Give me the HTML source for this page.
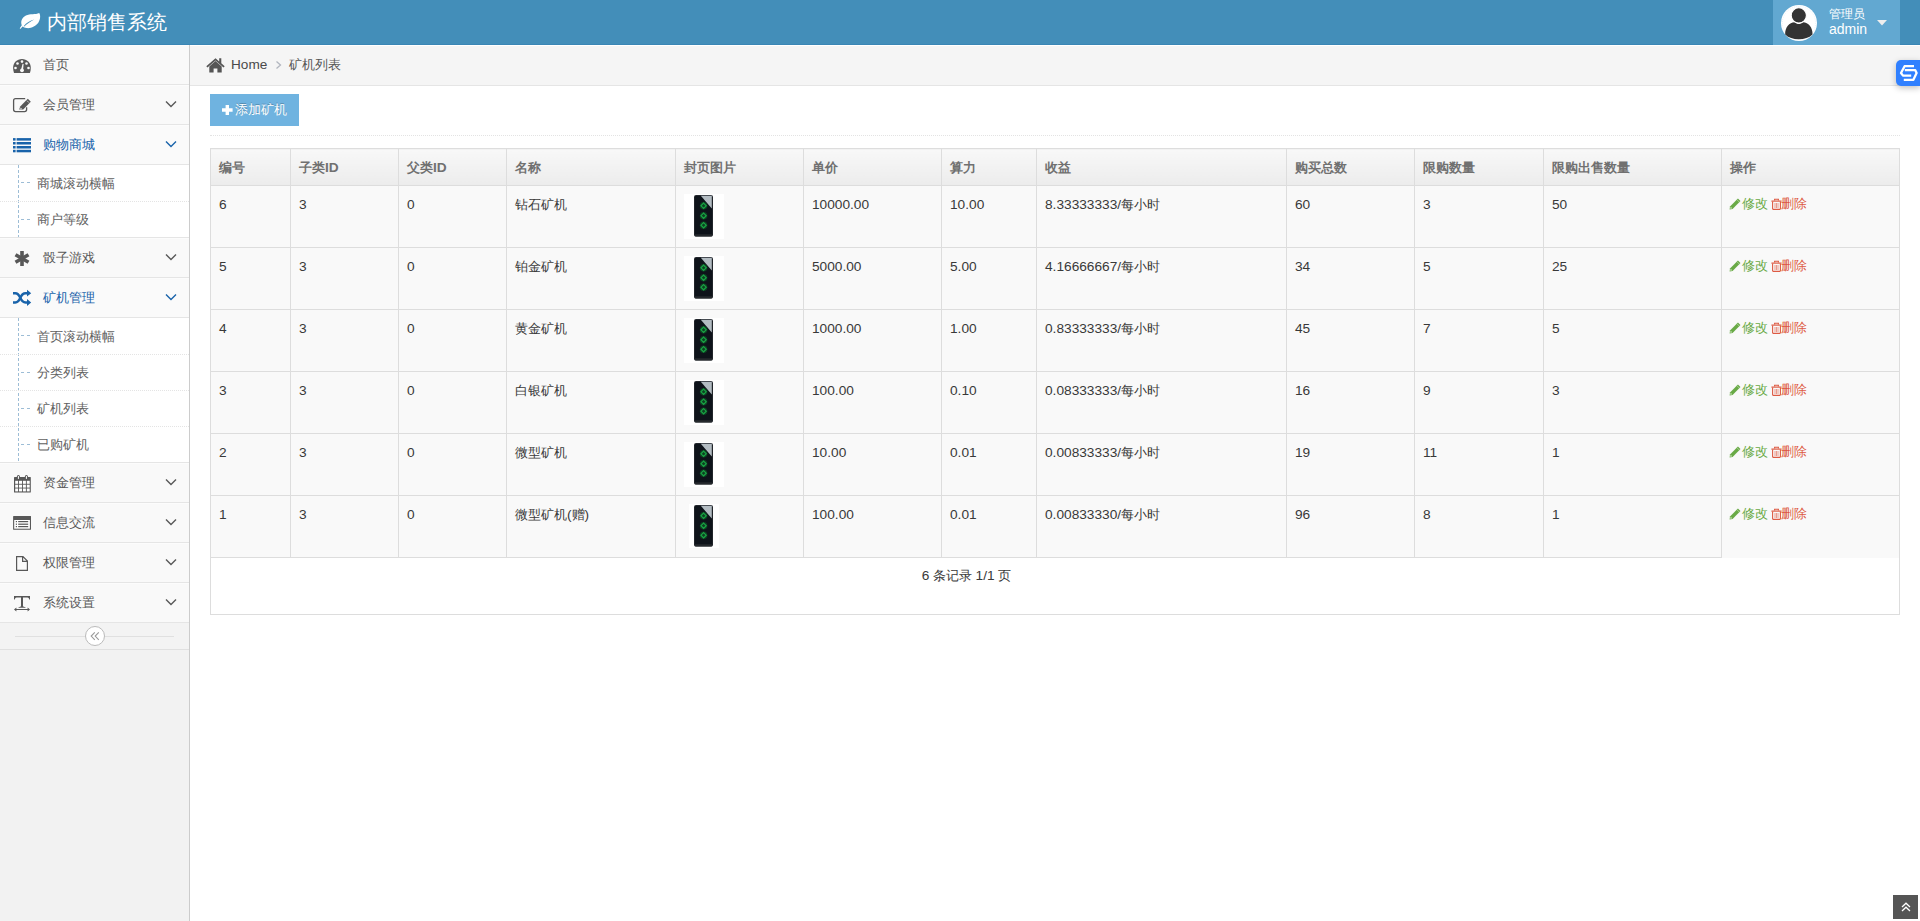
<!DOCTYPE html>
<html><head><meta charset="utf-8">
<style>
*{box-sizing:border-box}
html,body{margin:0;padding:0;width:1920px;height:921px;overflow:hidden;background:#fff;font-family:"Liberation Sans",sans-serif;font-size:13px;color:#393939}
.abs{position:absolute}
#nav{position:absolute;left:0;top:0;width:1920px;height:45px;background:#438EB9;border-bottom:1px solid #3a86b5}
#brand{position:absolute;left:47px;top:8px;color:#fff;font-size:20px;line-height:28px;white-space:nowrap}
#user{position:absolute;left:1773px;top:0;width:127px;height:45px;background:#62A8D1}
#sidebar{position:absolute;left:0;top:45px;width:190px;height:876px;background:#f2f2f2;border-right:1px solid #ccc}
.li{position:relative;width:189px;border-top:1px solid #fcfcfc;border-bottom:1px solid #e5e5e5;background:#f9f9f9}
.li .a{position:relative;height:38px;color:#585858}
.li .a span{position:absolute;left:43px;top:10px;line-height:18px;font-size:13px;white-space:nowrap}
.li.open .a{background:#fafafa;color:#1963aa}
.li .ic{position:absolute;left:13px;top:10px}
.li .arr{position:absolute;left:165px;top:14px}
.sub{position:relative;background:#fff;border-top:1px solid #e5e5e5}
.sub:before{content:"";position:absolute;left:18px;top:0;bottom:0;width:1px;background:repeating-linear-gradient(#9dbdd6 0 3px,transparent 3px 5px)}
.sub .s{position:relative;height:36px;border-top:1px dotted #e4e4e4;color:#616161}
.sub .s:first-child{border-top:0}
.sub .s:first-child span{top:10px}
.sub .s:after{content:"";position:absolute;left:21px;top:17px;width:10px;height:1px;background:repeating-linear-gradient(90deg,#9dbdd6 0 3px,transparent 3px 6px)}
.sub .s span{position:absolute;left:37px;top:9px;line-height:18px;white-space:nowrap}
#crumbs{position:absolute;left:190px;top:45px;width:1730px;height:41px;background:#f5f5f5;border-top:1px solid #fff;border-bottom:1px solid #e5e5e5}
#content{position:absolute;left:190px;top:86px;width:1730px}
#tbox{position:absolute;left:210px;top:148px;width:1690px;height:467px;border:1px solid #ddd;background:#fff}
table{border-collapse:collapse;table-layout:fixed;position:absolute;left:-1px;top:-1px;width:1690px}
th,td{border:1px solid #ddd;padding:0 8px;text-align:left;vertical-align:top}
th{height:37px;background:linear-gradient(#f8f8f8,#ececec);color:#707070;font-weight:bold;font-size:13px;line-height:18px;padding-top:10px}
td{height:62px;background:#f9f9f9;color:#393939;line-height:18px;padding-top:10px}
.n{font-size:13.7px}
#collapse{position:relative;height:27px;background:#f3f3f3;border-bottom:1px solid #e0e0e0}
#collapse .cl{position:absolute;left:15px;right:15px;top:13px;border-top:1px solid #e0e0e0}
#collapse .cb{position:absolute;left:85px;top:3px;width:20px;height:20px;border:1px solid #bbb;border-radius:50%;background:#fff}
#btn{position:absolute;left:210px;top:94px;width:89px;height:32px;background:#6fb3e0;color:#fff}
#btn span{position:absolute;left:25px;top:7px;line-height:18px;font-size:13px;white-space:nowrap;text-shadow:0 -1px 0 rgba(0,0,0,.25)}
#hr{position:absolute;left:210px;top:135px;width:1690px;border-top:1px dotted #e3e3e3}
.im{width:40px;height:45px;margin-top:-2px}
.im1{}
.im svg{display:block}
.ed{color:#69aa46}.dl{color:#dd5a43}
.ops{position:relative;height:18px;top:-1px}.ops svg,.ops span{position:absolute;top:0}.ops span{white-space:nowrap}
tbody tr:last-child td.op{border-bottom:0}
#pg{position:absolute;left:0;width:1511px;top:418px;text-align:center;color:#393939;line-height:18px}
#widget{position:absolute;left:1896px;top:60px;width:24px;height:26px;background:#3080ff;border-radius:5px 0 0 5px;box-shadow:0 2px 6px rgba(0,0,0,.25)}
#widget svg{display:block}
#up{position:absolute;left:1893px;top:895px;width:25px;height:24px;background:#555}
</style></head><body>
<div id="nav">
  <svg class="abs" style="left:19px;top:12px" width="23" height="18" viewBox="0 0 23 18"><path fill="#fff" d="M20.2 1C21.5 2.5 21.8 7 19.3 10.7C17 14 11.5 16.8 7.5 16C6 15.8 4.5 15.2 3.6 14.5L1.8 16.6C1.3 17.1 0.5 16.6 0.9 16L2.8 13.3C1.5 10 2.5 5.8 6.9 3.6C11 1.6 16.5 2.8 20.2 1Z"/><path fill="#438EB9" d="M4.6 14.3C7.5 10.8 11 8.6 15.2 7.6C11.6 9.6 8.2 11.6 5.3 14.6Z"/></svg>
  <div id="brand">内部销售系统</div>
  <div id="user">
<svg class="abs" style="left:8px;top:5px" width="36" height="36" viewBox="0 0 36 36"><circle cx="18" cy="18" r="18" fill="#fff"/><circle cx="18" cy="18" r="16.6" fill="none" stroke="#d5e3ee" stroke-width="0.5" stroke-dasharray="1 1.2"/><path fill="#333" d="M4.2 29.5C3.8 22.5 8.5 17.2 13.5 17.2C15 18.4 16.4 19 17.8 19C19.2 19 20.6 18.4 22.1 17.2C27.1 17.2 32 22.5 31.5 29.5C28 32.8 23.5 34.2 17.8 34.2C12 34.2 7.6 32.8 4.2 29.5Z"/><circle cx="17.8" cy="10.4" r="7.6" fill="#333" stroke="#fff" stroke-width="1.1"/></svg>
<span class="abs" style="left:56px;top:7px;font-size:12px;line-height:14px;color:#fff;white-space:nowrap">管理员</span>
<span class="abs" style="left:56px;top:21px;font-size:14px;line-height:16px;color:#fff;white-space:nowrap">admin</span>
<svg class="abs" style="left:104px;top:20px" width="10" height="6" viewBox="0 0 10 6"><path fill="#eee" d="M0 0H10L5 5.5Z"/></svg>
</div>
</div>
<div id="sidebar"><div class="li"><div class="a"><svg class="ic" style="left:10px;top:8px" width="24" height="22" viewBox="0 0 24 22"><path fill="currentColor" d="M12 5C7 5 3.1 8.8 3.1 13.8c0 1.9 0.4 3.6 0.9 5.1h15.9c0.6-1.5 0.9-3.2 0.9-5.1C20.8 8.8 16.9 5 12 5z"/><g fill="#f9f9f9"><circle cx="12" cy="7.6" r="1.3"/><circle cx="7.5" cy="9.5" r="1.3"/><circle cx="16.5" cy="9.5" r="1.3"/><circle cx="5.5" cy="14" r="1.3"/><circle cx="18.5" cy="14" r="1.3"/><circle cx="12" cy="16.3" r="1.9"/><path d="M11 16L12.6 9.8L13.6 10L13 16.4Z"/></g></svg><span>首页</span></div></div><div class="li"><div class="a"><svg class="ic" style="left:10px;top:8px" width="24" height="22" viewBox="0 0 24 22"><path d="M15.2 4.6H5.6Q3.6 4.6 3.6 6.6V15.6Q3.6 17.6 5.6 17.6H14.6Q16.6 17.6 16.6 15.6V13.2" fill="none" stroke="currentColor" stroke-width="1.3"/><path fill="currentColor" d="M9.2 15.6L10.2 12.4L17.8 4.8L20.8 7.8L13.2 15.4Z"/><path fill="#f9f9f9" d="M10.6 13.6L12 15L10.4 15.4Z"/><path stroke="#f9f9f9" stroke-width="0.7" d="M17 6.7L18.9 8.6"/></svg><span>会员管理</span><svg class="arr" width="12" height="8" viewBox="0 0 12 8"><path d="M1 1.5L6 6.5L11 1.5" fill="none" stroke="currentColor" stroke-width="1.4"/></svg></div></div><div class="li open"><div class="a"><svg class="ic" style="left:10px;top:8px" width="24" height="22" viewBox="0 0 24 22"><g fill="currentColor"><rect x="3" y="4.1" width="2.6" height="2.5"/><rect x="6.6" y="4.1" width="14.4" height="2.5"/><rect x="3" y="8" width="2.6" height="2.5"/><rect x="6.6" y="8" width="14.4" height="2.5"/><rect x="3" y="12" width="2.6" height="2.5"/><rect x="6.6" y="12" width="14.4" height="2.5"/><rect x="3" y="15.8" width="2.6" height="2.5"/><rect x="6.6" y="15.8" width="14.4" height="2.5"/></g></svg><span>购物商城</span><svg class="arr" width="12" height="8" viewBox="0 0 12 8"><path d="M1 1.5L6 6.5L11 1.5" fill="none" stroke="currentColor" stroke-width="1.4"/></svg></div><div class="sub"><div class="s"><span>商城滚动横幅</span></div><div class="s"><span>商户等级</span></div></div></div><div class="li"><div class="a"><svg class="ic" style="left:10px;top:8px" width="24" height="22" viewBox="0 0 24 22"><g fill="currentColor" transform="translate(12 11.5)"><rect x="-1.8" y="-7.5" width="3.6" height="15"/><rect x="-1.8" y="-7.5" width="3.6" height="15" transform="rotate(60)"/><rect x="-1.8" y="-7.5" width="3.6" height="15" transform="rotate(-60)"/></g></svg><span>骰子游戏</span><svg class="arr" width="12" height="8" viewBox="0 0 12 8"><path d="M1 1.5L6 6.5L11 1.5" fill="none" stroke="currentColor" stroke-width="1.4"/></svg></div></div><div class="li open"><div class="a"><svg class="ic" style="left:10px;top:8px" width="24" height="22" viewBox="0 0 24 22"><g fill="none" stroke="currentColor" stroke-width="2.4"><path d="M3 6.2H5.3C8.3 6.2 9.3 8.5 10.3 10.8S12.5 15.5 15.5 15.5H17.5"/><path d="M3 15.5H5.3C8.3 15.5 9.3 13.2 10.3 10.8S12.5 6.2 15.5 6.2H17.5"/></g><path fill="currentColor" d="M17 2.8L21.2 6.2L17 9.6Z M17 12.1L21.2 15.5L17 18.9Z"/></svg><span>矿机管理</span><svg class="arr" width="12" height="8" viewBox="0 0 12 8"><path d="M1 1.5L6 6.5L11 1.5" fill="none" stroke="currentColor" stroke-width="1.4"/></svg></div><div class="sub"><div class="s"><span>首页滚动横幅</span></div><div class="s"><span>分类列表</span></div><div class="s"><span>矿机列表</span></div><div class="s"><span>已购矿机</span></div></div></div><div class="li"><div class="a"><svg class="ic" style="left:10px;top:8px" width="24" height="22" viewBox="0 0 24 22"><path fill="currentColor" d="M4.6 5H20.2Q20.8 5 20.8 5.6V19.9Q20.8 20.6 20.2 20.6H4.6Q4 20.6 4 19.9V5.6Q4 5 4.6 5Z"/><g fill="#fff"><rect x="5.2" y="8.8" width="2.9" height="3"/><rect x="9" y="8.8" width="3" height="3"/><rect x="12.9" y="8.8" width="3" height="3"/><rect x="16.8" y="8.8" width="2.9" height="3"/><rect x="5.2" y="12.7" width="2.9" height="2.9"/><rect x="9" y="12.7" width="3" height="2.9"/><rect x="12.9" y="12.7" width="3" height="2.9"/><rect x="16.8" y="12.7" width="2.9" height="2.9"/><rect x="5.2" y="16.5" width="2.9" height="2.9"/><rect x="9" y="16.5" width="3" height="2.9"/><rect x="12.9" y="16.5" width="3" height="2.9"/><rect x="16.8" y="16.5" width="2.9" height="2.9"/></g><g fill="none" stroke="currentColor" stroke-width="1.1"><rect x="7.4" y="3.5" width="2" height="4" rx="1"/><rect x="15.4" y="3.5" width="2" height="4" rx="1"/></g><g fill="#fff"><rect x="7.9" y="4.3" width="1" height="2.6"/><rect x="15.9" y="4.3" width="1" height="2.6"/></g></svg><span>资金管理</span><svg class="arr" width="12" height="8" viewBox="0 0 12 8"><path d="M1 1.5L6 6.5L11 1.5" fill="none" stroke="currentColor" stroke-width="1.4"/></svg></div></div><div class="li"><div class="a"><svg class="ic" style="left:10px;top:8px" width="24" height="22" viewBox="0 0 24 22"><path fill="currentColor" d="M4.1 4H20.8Q21 4 21 4.5V17.2Q21 17.8 20.4 17.8H3.7Q3.1 17.8 3.1 17.2V4.6Q3.1 4 3.7 4Z"/><rect fill="#fff" x="4.2" y="8" width="15.7" height="8.7"/><g fill="currentColor"><rect x="5.8" y="9" width="1.2" height="1.2"/><rect x="8.2" y="9" width="10" height="1.2"/><rect x="5.8" y="11.6" width="1.2" height="1.2"/><rect x="8.2" y="11.6" width="10" height="1.2"/><rect x="5.8" y="14" width="1.2" height="1.2"/><rect x="8.2" y="14" width="10" height="1.2"/></g></svg><span>信息交流</span><svg class="arr" width="12" height="8" viewBox="0 0 12 8"><path d="M1 1.5L6 6.5L11 1.5" fill="none" stroke="currentColor" stroke-width="1.4"/></svg></div></div><div class="li"><div class="a"><svg class="ic" style="left:10px;top:8px" width="24" height="22" viewBox="0 0 24 22"><path d="M6.6 4.6H13L17.4 9V18.4H6.6Z M12.6 4.6V9.4H17.4" fill="none" stroke="currentColor" stroke-width="1.2"/></svg><span>权限管理</span><svg class="arr" width="12" height="8" viewBox="0 0 12 8"><path d="M1 1.5L6 6.5L11 1.5" fill="none" stroke="currentColor" stroke-width="1.4"/></svg></div></div><div class="li"><div class="a"><svg class="ic" style="left:10px;top:8px" width="24" height="22" viewBox="0 0 24 22"><g fill="currentColor"><path d="M4 4H20V7.5H19.2Q19 5.7 17.5 5.5H13V14.2Q13.3 14.8 15.5 15.2V15.8H8.5V15.2Q10.7 14.8 11 14.2V5.5H6.5Q5 5.7 4.8 7.5H4Z"/><path d="M4 17.5L6.4 15.6V17H17.6V15.6L20 17.5L17.6 19.4V18H6.4V19.4Z"/></g></svg><span>系统设置</span><svg class="arr" width="12" height="8" viewBox="0 0 12 8"><path d="M1 1.5L6 6.5L11 1.5" fill="none" stroke="currentColor" stroke-width="1.4"/></svg></div></div><div id="collapse"><div class="cl"></div><div class="cb"><svg class="abs" style="left:4px;top:4px" width="11" height="11" viewBox="0 0 11 11"><path d="M4.8 1.4L1.2 5.1L4.8 8.8M8.8 1.4L5.2 5.1L8.8 8.8" fill="none" stroke="#999" stroke-width="1.1"/></svg></div></div></div>
<div id="crumbs">
<svg class="abs" style="left:16px;top:11px" width="19" height="16" viewBox="0 0 19 16"><path fill="#555" d="M9.5 1.2L0.3 9.3L1.5 10.5L9.5 3.5L17.5 10.5L18.7 9.3L15.3 6.3V1.2H13.2V4.5Z M3.3 9.4V15.5H7.6V11.4H11.4V15.5H15.7V9.4L9.5 4Z"/></svg>
<span class="abs" style="left:41px;top:11px;font-size:13.6px;line-height:16px;color:#4a4a4a">Home</span>
<svg class="abs" style="left:85px;top:14px" width="8" height="10" viewBox="0 0 8 10"><path d="M1.5 1.5L5.5 5L1.5 8.5" fill="none" stroke="#b2b6bf" stroke-width="1.3"/></svg>
<span class="abs" style="left:99px;top:11px;font-size:13px;line-height:16px;color:#555">矿机列表</span>
</div>
<div id="btn"><svg class="abs" style="left:12px;top:11px" width="11" height="10" viewBox="0 0 11 10"><path fill="#fff" d="M3.6 0H7V3.3H10.6V6.7H7V10H3.6V6.7H0V3.3H3.6Z"/></svg><span>添加矿机</span></div>
<div id="hr"></div>
<svg width="0" height="0" style="position:absolute"><defs><symbol id="case" viewBox="0 0 40 45"><rect x="0" y="0" width="40" height="45" fill="#fff"/><use href="#casebody"/></symbol><symbol id="casebody" viewBox="0 0 40 45"><rect x="10" y="1" width="19" height="41.5" rx="2" fill="#2a2e33"/><rect x="10.7" y="1.8" width="17.6" height="40" rx="1.5" fill="#0e131a"/><path d="M16.8 1.8H27.8V14.5Z" fill="#b3bcc2"/><g fill="#0d4a24" opacity="0.85"><circle cx="19.6" cy="11.8" r="3.8"/><circle cx="19.6" cy="21.7" r="3.8"/><circle cx="19.6" cy="31.2" r="3.8"/></g><g fill="none" stroke="#19a444" stroke-width="1.2"><path d="M19.6 9.2L22.2 11.8L19.6 14.4L17 11.8Z"/><path d="M19.6 19.1L22.2 21.7L19.6 24.3L17 21.7Z"/><path d="M19.6 28.6L22.2 31.2L19.6 33.8L17 31.2Z"/></g><rect x="10.5" y="40.2" width="18" height="2.2" rx="1" fill="#25292d"/></symbol><symbol id="case1" viewBox="0 0 40 45"><rect x="5" y="0" width="30" height="44" fill="#fff"/><use href="#casebody"/></symbol></defs></svg><div id="tbox"><table><colgroup><col style="width:80px"><col style="width:108px"><col style="width:108px"><col style="width:169px"><col style="width:128px"><col style="width:138px"><col style="width:95px"><col style="width:250px"><col style="width:128px"><col style="width:129px"><col style="width:178px"><col style="width:178px"></colgroup><thead><tr><th>编号</th><th>子类<span class="n">ID</span></th><th>父类<span class="n">ID</span></th><th>名称</th><th>封页图片</th><th>单价</th><th>算力</th><th>收益</th><th>购买总数</th><th>限购数量</th><th>限购出售数量</th><th>操作</th></tr></thead><tbody><tr><td><span class="n">6</span></td><td><span class="n">3</span></td><td><span class="n">0</span></td><td>钻石矿机</td><td><div class="im"><svg width="40" height="45" viewBox="0 0 40 45"><use href="#case"/></svg></div></td><td><span class="n">10000.00</span></td><td><span class="n">10.00</span></td><td><span class="n">8.33333333/</span>每小时</td><td><span class="n">60</span></td><td><span class="n">3</span></td><td><span class="n">50</span></td><td class="op"><div class="ops"><svg style="left:-1px;top:3px" width="12" height="12" viewBox="0 0 12 12"><path fill="#69aa46" d="M0.6 11.4L1.03 8.43L8.93 0.53L11.47 3.07L3.57 10.97Z"/><circle cx="2" cy="10" r="0.8" fill="#dfeed6"/><path stroke="#cfe3c2" stroke-width="0.6" d="M7.83 1.63L10.37 4.17"/></svg><span class="ed" style="left:12px">修改</span><svg style="left:41px;top:3px" width="11" height="12" viewBox="0 0 11 12"><g fill="none" stroke="#dd5a43"><path stroke-width="1.1" d="M3.6 2.6V1.3H7.4V2.6"/><path stroke-width="1.2" d="M0.4 3.1H10.6"/><path stroke-width="1.1" d="M1.6 3.5V10.8Q1.6 11.4 2.2 11.4H8.8Q9.4 11.4 9.4 10.8V3.5"/><path stroke-width="0.8" stroke-opacity="0.75" d="M4 5V10M5.5 5V10M7 5V10"/></g></svg><span class="dl" style="left:51px">删除</span></div></td></tr><tr><td><span class="n">5</span></td><td><span class="n">3</span></td><td><span class="n">0</span></td><td>铂金矿机</td><td><div class="im"><svg width="40" height="45" viewBox="0 0 40 45"><use href="#case"/></svg></div></td><td><span class="n">5000.00</span></td><td><span class="n">5.00</span></td><td><span class="n">4.16666667/</span>每小时</td><td><span class="n">34</span></td><td><span class="n">5</span></td><td><span class="n">25</span></td><td class="op"><div class="ops"><svg style="left:-1px;top:3px" width="12" height="12" viewBox="0 0 12 12"><path fill="#69aa46" d="M0.6 11.4L1.03 8.43L8.93 0.53L11.47 3.07L3.57 10.97Z"/><circle cx="2" cy="10" r="0.8" fill="#dfeed6"/><path stroke="#cfe3c2" stroke-width="0.6" d="M7.83 1.63L10.37 4.17"/></svg><span class="ed" style="left:12px">修改</span><svg style="left:41px;top:3px" width="11" height="12" viewBox="0 0 11 12"><g fill="none" stroke="#dd5a43"><path stroke-width="1.1" d="M3.6 2.6V1.3H7.4V2.6"/><path stroke-width="1.2" d="M0.4 3.1H10.6"/><path stroke-width="1.1" d="M1.6 3.5V10.8Q1.6 11.4 2.2 11.4H8.8Q9.4 11.4 9.4 10.8V3.5"/><path stroke-width="0.8" stroke-opacity="0.75" d="M4 5V10M5.5 5V10M7 5V10"/></g></svg><span class="dl" style="left:51px">删除</span></div></td></tr><tr><td><span class="n">4</span></td><td><span class="n">3</span></td><td><span class="n">0</span></td><td>黄金矿机</td><td><div class="im"><svg width="40" height="45" viewBox="0 0 40 45"><use href="#case"/></svg></div></td><td><span class="n">1000.00</span></td><td><span class="n">1.00</span></td><td><span class="n">0.83333333/</span>每小时</td><td><span class="n">45</span></td><td><span class="n">7</span></td><td><span class="n">5</span></td><td class="op"><div class="ops"><svg style="left:-1px;top:3px" width="12" height="12" viewBox="0 0 12 12"><path fill="#69aa46" d="M0.6 11.4L1.03 8.43L8.93 0.53L11.47 3.07L3.57 10.97Z"/><circle cx="2" cy="10" r="0.8" fill="#dfeed6"/><path stroke="#cfe3c2" stroke-width="0.6" d="M7.83 1.63L10.37 4.17"/></svg><span class="ed" style="left:12px">修改</span><svg style="left:41px;top:3px" width="11" height="12" viewBox="0 0 11 12"><g fill="none" stroke="#dd5a43"><path stroke-width="1.1" d="M3.6 2.6V1.3H7.4V2.6"/><path stroke-width="1.2" d="M0.4 3.1H10.6"/><path stroke-width="1.1" d="M1.6 3.5V10.8Q1.6 11.4 2.2 11.4H8.8Q9.4 11.4 9.4 10.8V3.5"/><path stroke-width="0.8" stroke-opacity="0.75" d="M4 5V10M5.5 5V10M7 5V10"/></g></svg><span class="dl" style="left:51px">删除</span></div></td></tr><tr><td><span class="n">3</span></td><td><span class="n">3</span></td><td><span class="n">0</span></td><td>白银矿机</td><td><div class="im"><svg width="40" height="45" viewBox="0 0 40 45"><use href="#case"/></svg></div></td><td><span class="n">100.00</span></td><td><span class="n">0.10</span></td><td><span class="n">0.08333333/</span>每小时</td><td><span class="n">16</span></td><td><span class="n">9</span></td><td><span class="n">3</span></td><td class="op"><div class="ops"><svg style="left:-1px;top:3px" width="12" height="12" viewBox="0 0 12 12"><path fill="#69aa46" d="M0.6 11.4L1.03 8.43L8.93 0.53L11.47 3.07L3.57 10.97Z"/><circle cx="2" cy="10" r="0.8" fill="#dfeed6"/><path stroke="#cfe3c2" stroke-width="0.6" d="M7.83 1.63L10.37 4.17"/></svg><span class="ed" style="left:12px">修改</span><svg style="left:41px;top:3px" width="11" height="12" viewBox="0 0 11 12"><g fill="none" stroke="#dd5a43"><path stroke-width="1.1" d="M3.6 2.6V1.3H7.4V2.6"/><path stroke-width="1.2" d="M0.4 3.1H10.6"/><path stroke-width="1.1" d="M1.6 3.5V10.8Q1.6 11.4 2.2 11.4H8.8Q9.4 11.4 9.4 10.8V3.5"/><path stroke-width="0.8" stroke-opacity="0.75" d="M4 5V10M5.5 5V10M7 5V10"/></g></svg><span class="dl" style="left:51px">删除</span></div></td></tr><tr><td><span class="n">2</span></td><td><span class="n">3</span></td><td><span class="n">0</span></td><td>微型矿机</td><td><div class="im"><svg width="40" height="45" viewBox="0 0 40 45"><use href="#case"/></svg></div></td><td><span class="n">10.00</span></td><td><span class="n">0.01</span></td><td><span class="n">0.00833333/</span>每小时</td><td><span class="n">19</span></td><td><span class="n">11</span></td><td><span class="n">1</span></td><td class="op"><div class="ops"><svg style="left:-1px;top:3px" width="12" height="12" viewBox="0 0 12 12"><path fill="#69aa46" d="M0.6 11.4L1.03 8.43L8.93 0.53L11.47 3.07L3.57 10.97Z"/><circle cx="2" cy="10" r="0.8" fill="#dfeed6"/><path stroke="#cfe3c2" stroke-width="0.6" d="M7.83 1.63L10.37 4.17"/></svg><span class="ed" style="left:12px">修改</span><svg style="left:41px;top:3px" width="11" height="12" viewBox="0 0 11 12"><g fill="none" stroke="#dd5a43"><path stroke-width="1.1" d="M3.6 2.6V1.3H7.4V2.6"/><path stroke-width="1.2" d="M0.4 3.1H10.6"/><path stroke-width="1.1" d="M1.6 3.5V10.8Q1.6 11.4 2.2 11.4H8.8Q9.4 11.4 9.4 10.8V3.5"/><path stroke-width="0.8" stroke-opacity="0.75" d="M4 5V10M5.5 5V10M7 5V10"/></g></svg><span class="dl" style="left:51px">删除</span></div></td></tr><tr><td><span class="n">1</span></td><td><span class="n">3</span></td><td><span class="n">0</span></td><td>微型矿机<span class="n">(</span>赠<span class="n">)</span></td><td><div class="im im1"><svg width="40" height="45" viewBox="0 0 40 45"><use href="#case1"/></svg></div></td><td><span class="n">100.00</span></td><td><span class="n">0.01</span></td><td><span class="n">0.00833330/</span>每小时</td><td><span class="n">96</span></td><td><span class="n">8</span></td><td><span class="n">1</span></td><td class="op"><div class="ops"><svg style="left:-1px;top:3px" width="12" height="12" viewBox="0 0 12 12"><path fill="#69aa46" d="M0.6 11.4L1.03 8.43L8.93 0.53L11.47 3.07L3.57 10.97Z"/><circle cx="2" cy="10" r="0.8" fill="#dfeed6"/><path stroke="#cfe3c2" stroke-width="0.6" d="M7.83 1.63L10.37 4.17"/></svg><span class="ed" style="left:12px">修改</span><svg style="left:41px;top:3px" width="11" height="12" viewBox="0 0 11 12"><g fill="none" stroke="#dd5a43"><path stroke-width="1.1" d="M3.6 2.6V1.3H7.4V2.6"/><path stroke-width="1.2" d="M0.4 3.1H10.6"/><path stroke-width="1.1" d="M1.6 3.5V10.8Q1.6 11.4 2.2 11.4H8.8Q9.4 11.4 9.4 10.8V3.5"/><path stroke-width="0.8" stroke-opacity="0.75" d="M4 5V10M5.5 5V10M7 5V10"/></g></svg><span class="dl" style="left:51px">删除</span></div></td></tr></tbody></table><div id="pg"><span class="n">6</span> 条记录 <span class="n">1/1</span> 页</div></div><div id="widget"><svg width="24" height="26" viewBox="0 0 24 26"><g fill="none" stroke="#fff" stroke-width="2.3" stroke-linejoin="round"><path d="M18 6.2H8.6L5 13L7 15.6H15.2"/><path d="M8.8 10.2H19.3L20.6 13L17.4 19.8H7.8"/></g></svg></div>
<div id="up"><svg class="abs" style="left:8px;top:7px" width="10" height="10" viewBox="0 0 10 10"><path d="M1 5L5 1.2L9 5M1 9L5 5.2L9 9" fill="none" stroke="#fff" stroke-width="1.3"/></svg></div>
</body></html>
